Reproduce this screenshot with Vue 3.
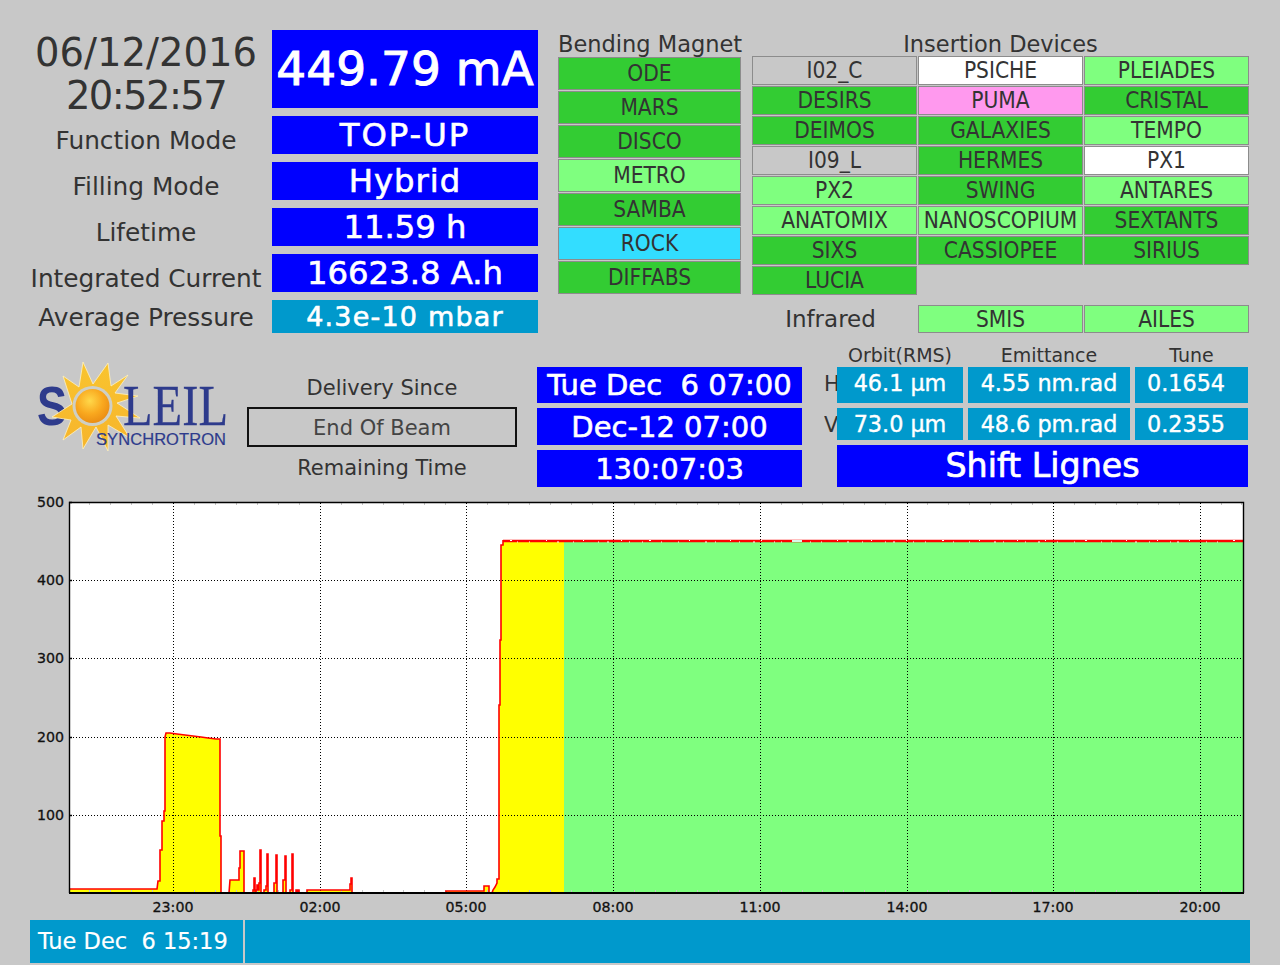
<template>
  <div class="page">
    <div class="top">
      <div class="status">
        <div class="clock">
          <div>06/12/2016</div>
          <div class="clock-time">20:52:57</div>
        </div>
        <div class="value current">449.79 mA</div>
        <template v-for="row in statusRows" :key="row.label">
          <div class="label" :class="row.labelClass">{{ row.label }}</div>
          <div class="value" :class="row.cls">{{ row.value }}</div>
        </template>
      </div>

      <div class="bending">
        <div class="col-title">Bending Magnet</div>
        <div class="bending-list">
          <div v-for="b in bending" :key="b.name" class="line" :class="b.state">{{ b.name }}</div>
        </div>
      </div>

      <div class="insertion">
        <div class="col-title short">Insertion Devices</div>
        <div class="insertion-grid">
          <div v-for="b in insertion" :key="b.name" class="line" :class="b.state">{{ b.name }}</div>
        </div>
        <div class="insertion-grid infrared">
          <div class="infrared-label">Infrared</div>
          <div class="line open">SMIS</div>
          <div class="line open">AILES</div>
        </div>
      </div>
    </div>

    <div class="middle">
      <svg class="logo" width="217" height="142" viewBox="30 345 217 142">
        <defs>
          <radialGradient id="sunball" cx="0.42" cy="0.35" r="0.7">
            <stop offset="0" stop-color="#ffd84a" />
            <stop offset="0.55" stop-color="#f9a81e" />
            <stop offset="1" stop-color="#e98a12" />
          </radialGradient>
          <linearGradient id="ray" x1="0" y1="0" x2="0" y2="1">
            <stop offset="0" stop-color="#f9c42e" />
            <stop offset="1" stop-color="#f6b42c" />
          </linearGradient>
        </defs>
        <text class="logo-s" x="37" y="425" textLength="30" lengthAdjust="spacingAndGlyphs">S</text>
        <polygon
          fill="url(#ray)"
          stroke="#fff3c0"
          stroke-width="0.8"
          points="83,362 93,384 108,363 111,386 128,375 115,393 138,396 117,403 140,418 116,416 130,438 108,425 108,451 96,427 83,449 81,427 63,440 71,420 52,417 72,404 63,376 79,387"
        />
        <circle cx="92.500" cy="406" r="20" fill="#cfcfc4" />
        <circle cx="92.500" cy="406" r="17" fill="url(#sunball)" />
        <text class="logo-leil" x="123" y="425" textLength="105" lengthAdjust="spacingAndGlyphs">LEIL</text>
        <text class="logo-sub" x="96" y="445" textLength="130" lengthAdjust="spacing">SYNCHROTRON</text>
      </svg>

      <div class="delivery">
        <div class="delivery-label">Delivery Since</div>
        <div class="beam">End Of Beam</div>
        <div class="delivery-label">Remaining Time</div>
      </div>

      <div class="times">
        <div class="time">{{ deliverySince }}</div>
        <div class="time">Dec-12 07:00</div>
        <div class="time">130:07:03</div>
      </div>

      <div class="beam-params">
        <div class="param-head">
          <div class="w-orbit">Orbit(RMS)</div>
          <div class="w-emit">Emittance</div>
          <div class="w-tune">Tune</div>
        </div>
        <div class="param-row tall">
          <div class="plane">H</div>
          <div class="param w-orbit">46.1 µm</div>
          <div class="param w-emit">4.55 nm.rad</div>
          <div class="param w-tune tune">0.1654</div>
        </div>
        <div class="param-row">
          <div class="plane">V</div>
          <div class="param w-orbit">73.0 µm</div>
          <div class="param w-emit">48.6 pm.rad</div>
          <div class="param w-tune tune">0.2355</div>
        </div>
        <div class="shift">Shift Lignes</div>
      </div>
    </div>

    <svg class="chart" width="1280" height="430" viewBox="0 490 1280 430">
      <rect x="69" y="502" width="1175" height="391" fill="#fff" />
      <path :d="greenFill" fill="#7fff7f" />
      <path :d="yellowFill" fill="#ffff00" />

      <g stroke="#000" stroke-width="1" stroke-dasharray="1 2">
        <line v-for="y in yTicks" :key="y.label" x1="70" x2="1244" :y1="y.y + 0.5" :y2="y.y + 0.5" />
        <line v-for="x in xTicks" :key="x.label" y1="503" y2="893" :x1="x.x + 0.5" :x2="x.x + 0.5" />
      </g>

      <g stroke="#c4c4c4" stroke-width="1">
        <template v-for="x in minorTicks" :key="x">
          <line :x1="x + 0.5" :x2="x + 0.5" y1="503" y2="505" />
          <line :x1="x + 0.5" :x2="x + 0.5" y1="890" y2="892" />
        </template>
      </g>

      <path :d="curve" fill="none" stroke="#ff0000" stroke-width="1.600" />
      <line x1="503" x2="1244" y1="541" y2="541" stroke="#ff0000" stroke-width="2.400" />
      <rect v-for="n in nicks" :key="n.x" :x="n.x" :y="n.y" :width="n.w" height="1" fill="#ffffff" />
      <rect x="792" y="540" width="10" height="2" fill="#d8f8e8" />

      <path d="M69.500 893V502.500H1243.500V893" fill="none" stroke="#000" stroke-width="1.400" />
      <line x1="69" x2="1244" y1="893" y2="893" stroke="#000" stroke-width="2" />

      <g stroke="#000" stroke-width="1.500">
        <line v-for="y in yTicks" :key="'m' + y.label" x1="69" x2="72" :y1="y.y + 0.5" :y2="y.y + 0.5" />
      </g>

      <text v-for="y in yTicks" :key="'l' + y.label" class="tick" x="64" :y="y.y + 5" text-anchor="end">{{ y.label }}</text>
      <text v-for="x in xTicks" :key="'b' + x.label" class="tick" :x="x.x" y="912" text-anchor="middle">{{ x.label }}</text>
    </svg>

    <div class="footer">
      <div class="foot-date">{{ footerDate }}</div>
      <div class="foot-msg"></div>
    </div>
  </div>
</template>

<script setup>
const deliverySince = 'Tue Dec  6 07:00'
const footerDate = 'Tue Dec  6 15:19'

const statusRows = [
  { label: 'Function Mode', value: 'TOP-UP', cls: 'mode' },
  { label: 'Filling Mode', value: 'Hybrid', cls: 'filling' },
  { label: 'Lifetime', value: '11.59 h' },
  { label: 'Integrated Current', value: '16623.8 A.h' },
  { label: 'Average Pressure', value: '4.3e-10 mbar', cls: 'pressure', labelClass: 'flat' },
]

const bending = [
  { name: 'ODE', state: 'on' },
  { name: 'MARS', state: 'on' },
  { name: 'DISCO', state: 'on' },
  { name: 'METRO', state: 'open' },
  { name: 'SAMBA', state: 'on' },
  { name: 'ROCK', state: 'cyan' },
  { name: 'DIFFABS', state: 'on' },
]

const insertion = [
  { name: 'I02_C', state: 'off' },
  { name: 'PSICHE', state: 'white' },
  { name: 'PLEIADES', state: 'open' },
  { name: 'DESIRS', state: 'on' },
  { name: 'PUMA', state: 'pink' },
  { name: 'CRISTAL', state: 'on' },
  { name: 'DEIMOS', state: 'on' },
  { name: 'GALAXIES', state: 'on' },
  { name: 'TEMPO', state: 'open' },
  { name: 'I09_L', state: 'off' },
  { name: 'HERMES', state: 'on' },
  { name: 'PX1', state: 'white' },
  { name: 'PX2', state: 'open' },
  { name: 'SWING', state: 'on' },
  { name: 'ANTARES', state: 'open' },
  { name: 'ANATOMIX', state: 'open' },
  { name: 'NANOSCOPIUM', state: 'open' },
  { name: 'SEXTANTS', state: 'on' },
  { name: 'SIXS', state: 'on' },
  { name: 'CASSIOPEE', state: 'on' },
  { name: 'SIRIUS', state: 'on' },
  { name: 'LUCIA', state: 'on' },
]

const yTicks = [
  { label: '500', y: 502 },
  { label: '400', y: 580 },
  { label: '300', y: 658 },
  { label: '200', y: 737 },
  { label: '100', y: 815 },
]

const xTicks = [
  { label: '23:00', x: 173 },
  { label: '02:00', x: 320 },
  { label: '05:00', x: 466 },
  { label: '08:00', x: 613 },
  { label: '11:00', x: 760 },
  { label: '14:00', x: 907 },
  { label: '17:00', x: 1053 },
  { label: '20:00', x: 1200 },
]

const minorTicks = []
for (let i = -4; i < 52; i++) {
  const x = Math.round(173 + i * 20.95)
  if (i % 7 !== 0 && x > 70 && x < 1243) minorTicks.push(x)
}

// curve traced from the reference, in page pixels
const points = [
  [70, 889], [157, 889], [158, 881], [160, 881], [160, 850], [162, 850], [162, 821], [164, 821], [164, 811],
  [165, 811], [165, 737], [166, 733], [170, 733], [177, 734], [185, 735], [193, 736], [201, 737], [208, 738],
  [216, 739], [220, 739], [220, 836], [221, 836], [221, 893], [229, 893], [230, 880], [239, 880], [239, 868],
  [240, 868], [240, 851], [244, 851], [244, 893], [253, 893], [253, 890], [254, 890], [254, 878], [255, 878],
  [255, 893], [256, 893], [256, 890], [257, 890], [257, 885], [258, 885], [258, 890], [259, 890], [259, 883],
  [260, 883], [260, 850], [261, 850], [261, 893], [264, 893], [264, 890], [266, 890], [266, 886], [267, 886],
  [267, 854], [268, 854], [268, 893], [274, 893], [274, 883], [276, 883], [276, 855], [277, 855], [277, 893],
  [283, 893], [283, 880], [285, 880], [285, 856], [286, 856], [286, 893], [290, 893], [290, 890], [292, 890],
  [292, 854], [293, 854], [293, 893], [296, 893], [296, 890], [297, 890], [297, 893], [298, 893], [298, 890],
  [299, 890], [299, 893], [307, 893], [307, 890], [350, 890], [350, 884], [351, 884], [351, 878], [352, 878],
  [352, 893], [446, 893], [446, 891], [484, 891], [484, 886], [489, 886], [489, 893], [492, 893], [493, 890],
  [495, 887], [497, 883], [497, 879], [499, 879], [499, 705], [500, 705], [500, 640], [501, 640], [501, 545],
  [503, 545], [503, 540],
]

const curve = 'M' + points.map((p) => `${p[0]} ${p[1]}`).join('L')
const yellowFill = curve + 'L564 540L564 893L70 893Z'
const greenFill = 'M564 541L1244 541L1244 893L564 893Z'

// small irregular dropouts along the plateau
const nicks = []
for (let x = 510, i = 0; x < 1240; i++) {
  nicks.push({ x, y: i % 3 === 0 ? 540 : 541.5, w: i % 4 === 0 ? 2 : 1 })
  x += 7 + ((i * 5) % 11)
}
</script>

<style scoped>
.page {
  width: 1280px;
  height: 965px;
  padding-top: 30px;
  box-sizing: border-box;
  overflow: hidden;
  font-family: "DejaVu Sans", sans-serif;
  color: #333;
}
.top {
  display: flex;
  height: 315px;
  padding-left: 30px;
}
.status {
  display: grid;
  grid-template-columns: 232px 266px;
  grid-template-rows: 78px 38px 38px 38px 38px 33px;
  gap: 8px 10px;
  width: 508px;
  height: 303px;
}
.clock {
  font-size: 38.500px;
  line-height: 43px;
  padding-top: 1px;
  text-align: center;
  white-space: nowrap;
  color: #333;
}
.clock-time {
  letter-spacing: -1.600px;
}
.label {
  font-size: 24.800px;
  line-height: 38px;
  padding-top: 6px;
  text-align: center;
  white-space: nowrap;
}
.label.flat {
  padding-top: 1px;
  line-height: 33px;
}
.value {
  background: #0000ff;
  color: #fff;
  font-size: 32.300px;
  -webkit-text-stroke: 0.6px #fff;
  line-height: 39px;
  text-align: center;
  white-space: nowrap;
}
.value.current {
  font-size: 47px;
  -webkit-text-stroke: 1px #fff;
  line-height: 78px;
}
.value.mode {
  letter-spacing: 2px;
}
.value.filling {
  letter-spacing: 1px;
}
.value.pressure {
  background: #0099cc;
  font-size: 27px;
  letter-spacing: 1.200px;
  line-height: 33px;
}
.bending {
  width: 183px;
  margin-left: 20px;
}
.col-title {
  font-size: 22.500px;
  height: 27px;
  line-height: 29px;
  text-align: center;
  white-space: nowrap;
}
.col-title.short {
  height: 26px;
}
.bending-list {
  display: flex;
  flex-direction: column;
  gap: 1px;
}
.bending-list .line {
  height: 33px;
  line-height: 31px;
}
.insertion {
  width: 497px;
  margin-left: 11px;
}
.insertion-grid {
  display: grid;
  grid-template-columns: repeat(3, 165px);
  gap: 1px;
}
.insertion-grid .line {
  height: 29px;
  line-height: 27px;
}
.insertion-grid.infrared {
  margin-top: 10px;
}
.insertion-grid.infrared .line {
  height: 28px;
  line-height: 26px;
}
.infrared-label {
  font-size: 23px;
  line-height: 28px;
  text-align: center;
  padding-right: 8px;
}
.line {
  box-sizing: border-box;
  border: 1px solid #8c8c8c;
  font-size: 22.500px;
  font-stretch: condensed;
  text-align: center;
  white-space: nowrap;
  overflow: hidden;
}
.on { background: #33cc33; }
.open { background: #7fff7f; }
.off { background: #c8c8c8; }
.white { background: #fff; }
.pink { background: #ff99ee; }
.cyan { background: #33ddff; }

.middle {
  display: flex;
  height: 142px;
  padding-left: 30px;
}
.logo {
  display: block;
  width: 217px;
  flex: none;
}
.logo-s {
  font-family: "Liberation Sans", sans-serif;
  font-size: 56px;
  font-weight: 700;
  fill: #2e3b8c;
}
.logo-leil {
  font-family: "Liberation Serif", serif;
  font-size: 58px;
  fill: #2e3b8c;
  stroke: #2e3b8c;
  stroke-width: 0.3px;
}
.logo-sub {
  font-family: "Liberation Sans", sans-serif;
  font-size: 16.500px;
  fill: #2e3b8c;
  stroke: #2e3b8c;
  stroke-width: 0.2px;
}
.delivery {
  width: 270px;
  padding-top: 22px;
  text-align: center;
  font-size: 21px;
}
.delivery-label {
  height: 40px;
  line-height: 42px;
  white-space: nowrap;
}
.beam {
  height: 40px;
  box-sizing: border-box;
  border: 2px solid #111;
  line-height: 38px;
  color: #444;
}
.times {
  width: 265px;
  margin-left: 20px;
  padding-top: 22px;
  display: flex;
  flex-direction: column;
  gap: 5px;
}
.time {
  background: #0000ff;
  color: #fff;
  font-size: 29px;
  -webkit-text-stroke: 0.6px #fff;
  height: 37px;
  line-height: 38px;
  text-align: center;
  white-space: pre;
}
.time:first-child {
  height: 36px;
  line-height: 37px;
}
.beam-params {
  margin-left: 22px;
  width: 424px;
}
.param-head {
  display: flex;
  height: 22px;
  padding-left: 13px;
  gap: 5px;
  font-size: 19px;
  line-height: 20px;
  text-align: center;
  white-space: nowrap;
}
.param-row {
  display: flex;
  gap: 5px;
  height: 32px;
  margin-bottom: 5px;
}
.param-row.tall {
  height: 36px;
}
.plane {
  width: 13px;
  margin-right: -5px;
  overflow: hidden;
  font-size: 21px;
  line-height: 34px;
}
.param {
  background: #0099cc;
  color: #fff;
  font-size: 22.300px;
  -webkit-text-stroke: 0.4px #fff;
  line-height: 33px;
  text-align: center;
  white-space: nowrap;
}
.param.tune {
  box-sizing: border-box;
  padding-right: 11px;
}
.w-orbit { width: 126px; }
.w-emit { width: 162px; }
.w-tune { width: 113px; }
.shift {
  margin-left: 13px;
  width: 411px;
  height: 42px;
  background: #0000ff;
  color: #fff;
  font-size: 33.300px;
  -webkit-text-stroke: 0.7px #fff;
  line-height: 42px;
  text-align: center;
  white-space: nowrap;
}
.chart {
  display: block;
  margin-top: 3px;
}
.tick {
  font-family: "DejaVu Sans", sans-serif;
  font-size: 14.200px;
  fill: #111;
  stroke: #111;
  stroke-width: 0.3px;
}
.footer {
  display: flex;
  gap: 2px;
  margin-left: 30px;
  height: 43px;
}
.foot-date {
  width: 213px;
  box-sizing: border-box;
  padding-left: 8px;
  background: #0099cc;
  color: #fff;
  font-size: 22.500px;
  -webkit-text-stroke: 0.2px #fff;
  line-height: 43px;
  white-space: pre;
}
.foot-msg {
  width: 1005px;
  background: #0099cc;
}
</style>

<style>
body {
  background: #c8c8c8;
}
</style>
